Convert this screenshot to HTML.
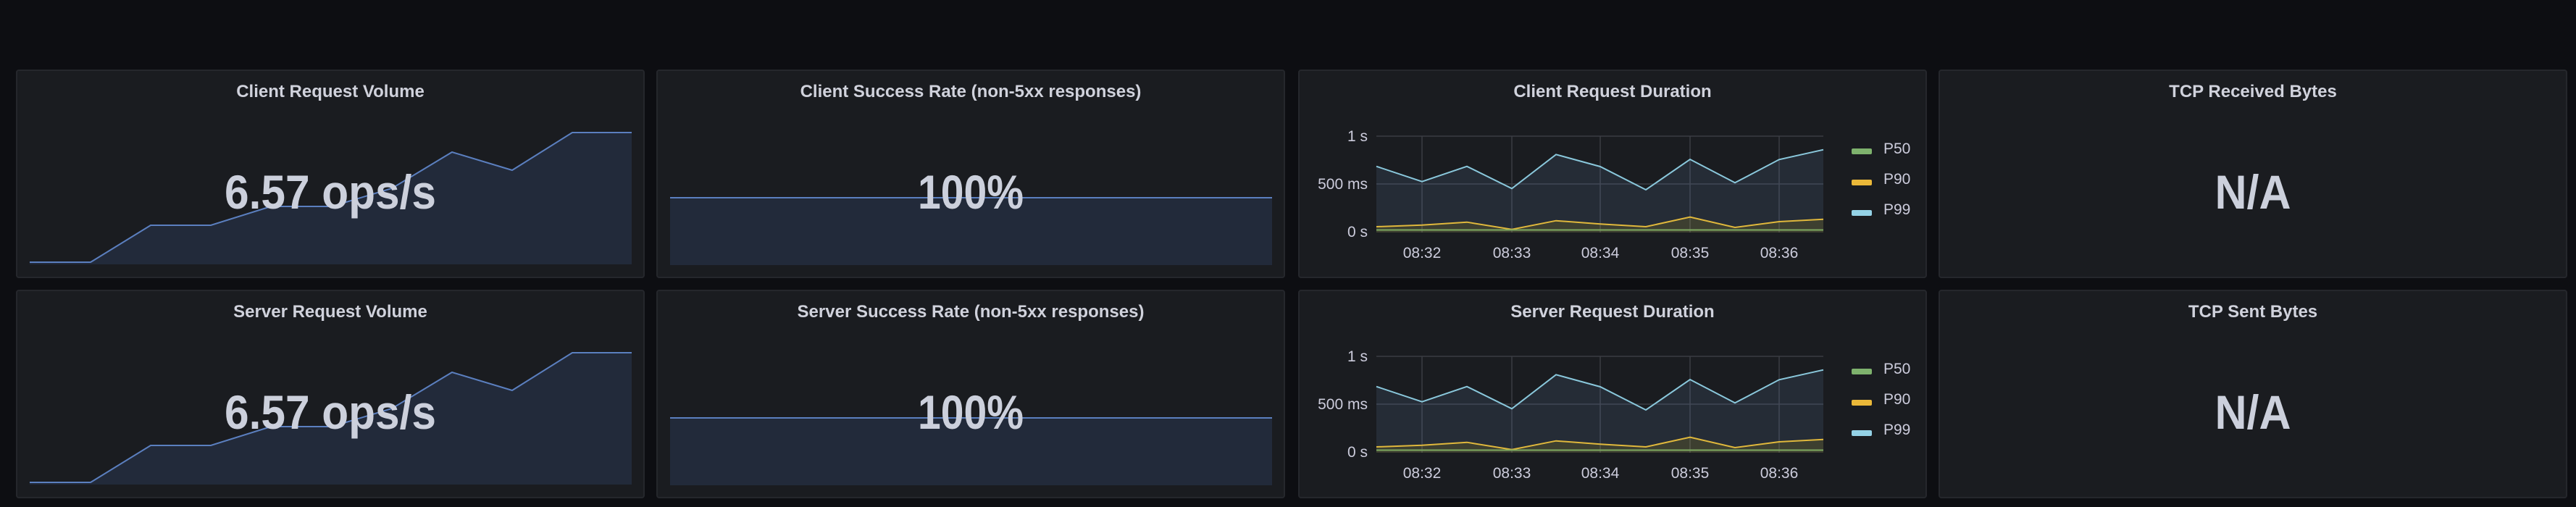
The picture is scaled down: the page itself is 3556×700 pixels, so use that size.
<!DOCTYPE html>
<html><head><meta charset="utf-8"><style>
html,body{margin:0;padding:0;background:#0d0e12;width:3556px;height:700px;overflow:hidden}
svg{display:block}
text{font-family:"Liberation Sans",sans-serif;fill:#ccccdc}
.t{font-size:24px;font-weight:bold;text-anchor:middle;fill:#d0d2dc}
.v{font-size:66px;font-weight:bold;text-anchor:middle;fill:#ccd0dc}
.ax{font-size:21px}
</style></head><body>
<svg width="3556" height="700" viewBox="0 0 3556 700" xmlns="http://www.w3.org/2000/svg">
<rect width="3556" height="700" fill="#0d0e12"/>
<defs>
<g id="vol">
<path d="M41,362 L125,362 L208,311 L291,311 L374,285 L458,285 L541,260 L624,210 L707,235 L790,183 L872,183 L872,365 L41,365 Z" fill="#222a3a"/>
<path d="M41,362 L125,362 L208,311 L291,311 L374,285 L458,285 L541,260 L624,210 L707,235 L790,183 L872,183" fill="none" stroke="#5b7fbf" stroke-width="2"/>
</g>
<g id="rate">
<rect x="925" y="273" width="831" height="93" fill="#222a3a"/>
<line x1="925" y1="273" x2="1756" y2="273" stroke="#5b7fbf" stroke-width="2"/>
</g>
<g id="dur">
<g stroke="#3a3c42" stroke-width="1.5">
<line x1="1900" y1="188" x2="2517" y2="188"/>
<line x1="1900" y1="254" x2="2517" y2="254"/>
<line x1="1963" y1="188" x2="1963" y2="321"/>
<line x1="2087" y1="188" x2="2087" y2="321"/>
<line x1="2209" y1="188" x2="2209" y2="321"/>
<line x1="2333" y1="188" x2="2333" y2="321"/>
<line x1="2456" y1="188" x2="2456" y2="321"/>
</g>
<path d="M1900,229.7 L1963,250.7 L2025,229.7 L2087,260.3 L2148,213.3 L2209,230 L2272,262 L2333,220 L2395,252.3 L2456,220.3 L2517,206.7 L2517,321 L1900,321 Z" fill="#8ab8ff" fill-opacity="0.1"/>
<path d="M1900,313 L1963,310.7 L2025,306.7 L2087,316.7 L2148,304.7 L2209,309.3 L2272,313 L2333,299.7 L2395,314 L2456,306 L2517,302.7 L2517,321 L1900,321 Z" fill="#f2cc0c" fill-opacity="0.12"/>
<path d="M1900,229.7 L1963,250.7 L2025,229.7 L2087,260.3 L2148,213.3 L2209,230 L2272,262 L2333,220 L2395,252.3 L2456,220.3 L2517,206.7" fill="none" stroke="#8ac8dc" stroke-width="2"/>
<path d="M1900,313 L1963,310.7 L2025,306.7 L2087,316.7 L2148,304.7 L2209,309.3 L2272,313 L2333,299.7 L2395,314 L2456,306 L2517,302.7" fill="none" stroke="#e0b83c" stroke-width="2"/>
<line x1="1900" y1="317.5" x2="2517" y2="317.5" stroke="#7eaa60" stroke-width="2"/>
<text class="ax" x="1888" y="195" text-anchor="end">1 s</text>
<text class="ax" x="1888" y="261" text-anchor="end">500 ms</text>
<text class="ax" x="1888" y="327" text-anchor="end">0 s</text>
<text class="ax" x="1963" y="356" text-anchor="middle">08:32</text>
<text class="ax" x="2087" y="356" text-anchor="middle">08:33</text>
<text class="ax" x="2209" y="356" text-anchor="middle">08:34</text>
<text class="ax" x="2333" y="356" text-anchor="middle">08:35</text>
<text class="ax" x="2456" y="356" text-anchor="middle">08:36</text>
<rect x="2556" y="205" width="28" height="8" rx="2" fill="#7eb26d"/>
<rect x="2556" y="248" width="28" height="8" rx="2" fill="#eab839"/>
<rect x="2556" y="290" width="28" height="8" rx="2" fill="#94d2e6"/>
<text class="ax" x="2600" y="212">P50</text>
<text class="ax" x="2600" y="254">P90</text>
<text class="ax" x="2600" y="296">P99</text>
</g>
</defs>
<g fill="#1a1c20" stroke="#25272c" stroke-width="2">
<rect x="23" y="97" width="866" height="286" rx="3"/>
<rect x="907" y="97" width="866" height="286" rx="3"/>
<rect x="1793" y="97" width="866" height="286" rx="3"/>
<rect x="2677" y="97" width="866" height="286" rx="3"/>
<rect x="23" y="401" width="866" height="286" rx="3"/>
<rect x="907" y="401" width="866" height="286" rx="3"/>
<rect x="1793" y="401" width="866" height="286" rx="3"/>
<rect x="2677" y="401" width="866" height="286" rx="3"/>
</g>
<use href="#vol"/><use href="#rate"/><use href="#dur"/>
<g transform="translate(0,304)"><use href="#vol"/><use href="#rate"/><use href="#dur"/></g>
<text class="t" x="456" y="134">Client Request Volume</text>
<text class="t" x="1340" y="134">Client Success Rate (non-5xx responses)</text>
<text class="t" x="2226" y="134">Client Request Duration</text>
<text class="t" x="3110" y="134">TCP Received Bytes</text>
<text class="t" x="456" y="438">Server Request Volume</text>
<text class="t" x="1340" y="438">Server Success Rate (non-5xx responses)</text>
<text class="t" x="2226" y="438">Server Request Duration</text>
<text class="t" x="3110" y="438">TCP Sent Bytes</text>
<text class="v" x="456" y="288" textLength="292" lengthAdjust="spacingAndGlyphs">6.57 ops/s</text>
<text class="v" x="1340" y="288" textLength="146" lengthAdjust="spacingAndGlyphs">100%</text>
<text class="v" x="3110" y="288" textLength="105" lengthAdjust="spacingAndGlyphs">N/A</text>
<text class="v" x="456" y="592" textLength="292" lengthAdjust="spacingAndGlyphs">6.57 ops/s</text>
<text class="v" x="1340" y="592" textLength="146" lengthAdjust="spacingAndGlyphs">100%</text>
<text class="v" x="3110" y="592" textLength="105" lengthAdjust="spacingAndGlyphs">N/A</text>
</svg>
</body></html>
